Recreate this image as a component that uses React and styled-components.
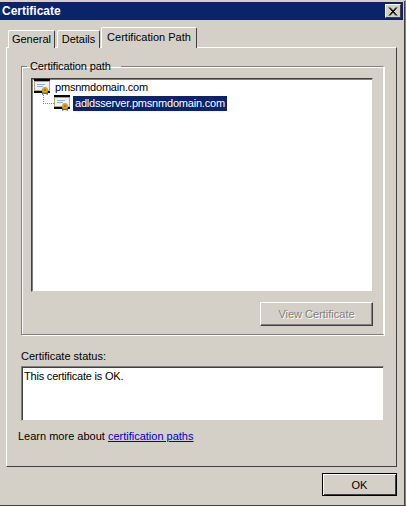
import React from 'react';
import styled, { createGlobalStyle } from 'styled-components';

const GlobalStyle = createGlobalStyle`
  html, body {
    margin: 0;
    padding: 0;
    background: #fff;
  }
  * {
    box-sizing: border-box;
  }
`;

const Window = styled.div`
  width: 406px;
  height: 506px;
  padding: 1px 2px 0 0;
  background: #d4d0c8;
  border-right: 1px solid #808080;
  border-bottom: 1px solid #404040;
  border-top: 1px solid #d4d0c8;
  box-shadow: inset -1px 0 0 #404040;
  font-family: "Liberation Sans", sans-serif;
  font-size: 11px;
  color: #000;
  display: flex;
  flex-direction: column;
`;

const TitleBar = styled.div`
  height: 18px;
  flex: none;
  background: #0a246a;
  color: #fff;
  font-weight: bold;
  font-size: 12px;
  display: flex;
  align-items: center;
  justify-content: space-between;
  padding: 0 2px 0 2px;
`;

const CloseButton = styled.div`
  width: 16px;
  height: 14px;
  background: #d4d0c8;
  border: 1px solid;
  border-color: #fff #404040 #404040 #fff;
  display: flex;
  align-items: center;
  justify-content: center;
`;

const Body = styled.div`
  flex: 1;
  display: flex;
  flex-direction: column;
  padding: 8px 7px 0 6px;
`;

const TabStrip = styled.div`
  display: flex;
  align-items: flex-end;
  height: 20px;
  padding-left: 2px;
  margin-bottom: -1px;
  position: relative;
  z-index: 1;
`;

const Tab = styled.div`
  height: ${({ $active }) => ($active ? '21px' : '18px')};
  width: ${({ $w }) => $w}px;
  margin-right: ${({ $gap }) => $gap || 0}px;
  background: #d4d0c8;
  border: 1px solid;
  border-color: #fff #404040 transparent #fff;
  border-bottom: none;
  border-radius: 2px 2px 0 0;
  display: flex;
  align-items: center;
  justify-content: center;
  padding-bottom: ${({ $active }) => ($active ? '2px' : '1px')};
`;

const TabPanel = styled.div`
  width: 391px;
  height: 420px;
  border: 1px solid;
  border-color: #fff #404040 #404040 #fff;
  padding: 12px 11px 0 14px;
  display: flex;
  flex-direction: column;
`;

const GroupBox = styled.fieldset`
  margin: 0;
  padding: 5px 10px 0 9px;
  width: 363px;
  height: 275px;
  border: 1px solid;
  border-color: #808080 #fff #808080 #808080;
  box-shadow: inset 1px 1px 0 #fff, 1px 1px 0 #fff;
  display: flex;
  flex-direction: column;
  align-items: flex-end;
`;

const Legend = styled.legend`
  padding: 0 10px 0 3px;
  margin-left: -4px;
  line-height: 13px;
  letter-spacing: -0.1px;
`;

const Tree = styled.div`
  width: 342px;
  height: 214px;
  background: #fff;
  border: 1px solid;
  border-color: #404040 #d4d0c8 #d4d0c8 #404040;
  box-shadow: inset 1px 1px 0 #808080;
  padding: 0 2px;
  position: relative;
`;

const TreeRow = styled.div`
  height: 16px;
  display: flex;
  align-items: center;
  gap: 3px;
  padding-left: ${({ $indent }) => $indent || 0}px;
`;

const Connector = styled.div`
  position: absolute;
  left: 11px;
  top: 14px;
  width: 11px;
  height: 11px;
  border-left: 1px dotted #808080;
  border-bottom: 1px dotted #808080;
`;

const NodeLabel = styled.span`
  padding: 1px 2px;
  line-height: 13px;
  white-space: nowrap;
  letter-spacing: -0.2px;
  background: ${({ $selected }) => ($selected ? '#0a246a' : 'transparent')};
  color: ${({ $selected }) => ($selected ? '#fff' : '#000')};
`;

const ViewButton = styled.div`
  width: 113px;
  height: 24px;
  margin-top: 10px;
  border: 1px solid;
  border-color: #fff #404040 #404040 #fff;
  box-shadow: inset -1px -1px 0 #808080;
  color: #808080;
  text-shadow: 1px 1px 0 #fff;
  display: flex;
  align-items: center;
  justify-content: center;
`;

const StatusLabel = styled.div`
  margin-top: 15px;
  height: 15px;
  line-height: 13px;
`;

const StatusBox = styled.div`
  width: 363px;
  height: 55px;
  margin-top: 1px;
  background: #fff;
  border: 1px solid;
  border-color: #808080 #d4d0c8 #d4d0c8 #808080;
  box-shadow: inset 1px 1px 0 #404040;
  padding: 3px 2px;
  line-height: 13px;
  letter-spacing: -0.2px;
`;

const LearnMore = styled.div`
  margin-top: 9px;
  margin-left: -3px;
  line-height: 13px;
`;

const Link = styled.a`
  color: #0000c8;
  text-decoration: underline;
`;

const Footer = styled.div`
  display: flex;
  justify-content: flex-end;
  padding-top: 6px;
  width: 391px;
`;

const OkButton = styled.div`
  width: 75px;
  height: 23px;
  border: 1px solid #000;
  box-shadow: inset 1px 1px 0 #fff, inset -1px -1px 0 #404040;
  display: flex;
  align-items: center;
  justify-content: center;
`;

const CertIcon = () => (
  <svg width="16" height="16" viewBox="0 0 16 16" style={{ flex: 'none', display: 'block' }}>
    <rect x="0" y="0" width="16" height="2" fill="#000" />
    <rect x="0" y="2" width="16" height="10" fill="#b8a078" />
    <rect x="1" y="3" width="14" height="8" fill="#eef1f6" />
    <path d="M3 5.5h8M3 7.5h6" stroke="#9ab0cc" strokeWidth="1" />
    <rect x="0" y="12" width="16" height="2" fill="#000" />
    <path d="M8 12l0 4 2-1 2 0 2 1 0-4z" fill="#2a6ad8" />
    <circle cx="11" cy="11" r="3" fill="#e0a010" />
    <circle cx="11" cy="11" r="1" fill="#a86800" />
  </svg>
);

const App = () => (
  <>
    <GlobalStyle />
    <Window>
      <TitleBar>
        <span>Certificate</span>
        <CloseButton>
          <svg width="10" height="9" viewBox="0 0 10 9">
            <path d="M1 0.5l7 8M2 0.5l7 8M8 0.5l-7 8M9 0.5l-7 8" stroke="#000" strokeWidth="1" />
          </svg>
        </CloseButton>
      </TitleBar>
      <Body>
        <TabStrip>
          <Tab $w={47} $gap={2}>General</Tab>
          <Tab $w={43} $gap={1}>Details</Tab>
          <Tab $w={96} $active>Certification Path</Tab>
        </TabStrip>
        <TabPanel>
          <GroupBox>
            <Legend>Certification path</Legend>
            <Tree>
              <Connector />
              <TreeRow>
                <CertIcon />
                <NodeLabel>pmsnmdomain.com</NodeLabel>
              </TreeRow>
              <TreeRow $indent={20}>
                <CertIcon />
                <NodeLabel $selected>adldsserver.pmsnmdomain.com</NodeLabel>
              </TreeRow>
            </Tree>
            <ViewButton>View Certificate</ViewButton>
          </GroupBox>
          <StatusLabel>Certificate status:</StatusLabel>
          <StatusBox>This certificate is OK.</StatusBox>
          <LearnMore>
            Learn more about <Link href="#">certification paths</Link>
          </LearnMore>
        </TabPanel>
        <Footer>
          <OkButton>OK</OkButton>
        </Footer>
      </Body>
    </Window>
  </>
);

export default App;
